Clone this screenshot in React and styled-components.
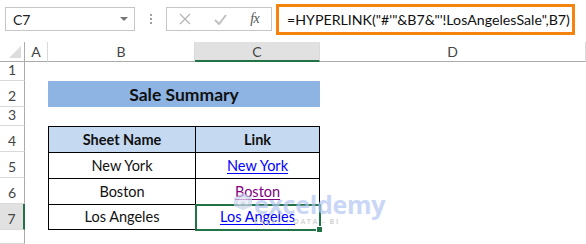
import React from 'react'
import styled, { createGlobalStyle } from 'styled-components'

const Global = createGlobalStyle`
    body {
        margin: 0;
        background: #ffffff;
        font-family: "Lato", "Liberation Sans", sans-serif;
    }
`

const Page = styled.div`
    position: relative;
    width: 586px;
    height: 244px;
    overflow: hidden;
    background: #ffffff;
`

const Bar = styled.div`
    display: flex;
    align-items: flex-start;
    height: 42px;
    padding-left: 5px;
    box-sizing: border-box;
`

const NameBox = styled.div`
    display: flex;
    align-items: center;
    justify-content: space-between;
    width: 130px;
    height: 24px;
    margin-top: 7px;
    padding: 0 6px 0 7px;
    box-sizing: border-box;
    border: 1px solid #c6c6c6;
    font-size: 14px;
    color: #222;
`

const Arrow = styled.span`
    width: 0;
    height: 0;
    border-left: 4px solid transparent;
    border-right: 4px solid transparent;
    border-top: 4px solid #777;
`

const Dots = styled.div`
    display: flex;
    flex-direction: column;
    gap: 2px;
    margin: 14px 14px 0 15px;
    span {
        width: 2px;
        height: 2px;
        background: #a0a0a0;
    }
`

const Buttons = styled.div`
    display: flex;
    align-items: center;
    justify-content: space-around;
    width: 106px;
    height: 24px;
    margin-top: 7px;
    box-sizing: border-box;
    border: 1px solid #c6c6c6;
`

const Fx = styled.span`
    font-family: "Liberation Serif", serif;
    font-style: italic;
    font-size: 14px;
    color: #555;
    letter-spacing: -0.5px;
`

const Formula = styled.div`
    display: flex;
    align-items: center;
    width: 299px;
    height: 31px;
    margin: 4px 0 0 4px;
    padding-left: 8px;
    box-sizing: border-box;
    border: 3px solid #f7830f;
    font-size: 14.2px;
    color: #111;
    white-space: nowrap;
`

const Sheet = styled.div`
    display: grid;
    grid-template-columns: 25px 23px 147px 125px 1fr;
    grid-template-rows: 20px 19px 26px 19px 26px 26px 26px 26px 14px;
`

const Corner = styled.div`
    position: relative;
    border-right: 1px solid #ababab;
    border-bottom: 1px solid #ababab;
    &::after {
        content: '';
        position: absolute;
        right: 3px;
        bottom: 3px;
        border-left: 12px solid transparent;
        border-bottom: 12px solid #dcdcdc;
    }
`

const ColHead = styled.div`
    display: flex;
    align-items: center;
    justify-content: center;
    font-size: 14px;
    color: #444;
    background: ${p => (p.$active ? '#e1e1e1' : '#ffffff')};
    border-right: 1px solid #dadada;
    border-bottom: ${p => (p.$active ? '2px solid #217346' : '1px solid #ababab')};
    box-sizing: border-box;
`

const RowHead = styled.div`
    display: flex;
    align-items: flex-end;
    justify-content: center;
    padding-bottom: 1px;
    font-size: 14px;
    line-height: 18px;
    color: #444;
    background: ${p => (p.$active ? '#e1e1e1' : '#ffffff')};
    border-bottom: 1px solid #dadada;
    border-right: ${p => (p.$active ? '2px solid #217346' : '1px solid #ababab')};
    box-sizing: border-box;
`

const Blank = styled.div``

const Title = styled.div`
    grid-column: span 2;
    display: flex;
    align-items: center;
    justify-content: center;
    background: #8db4e2;
    font-weight: 700;
    font-size: 17.5px;
    color: #111;
`

const TableCell = styled.div`
    position: relative;
    display: flex;
    align-items: flex-end;
    justify-content: center;
    padding-bottom: 3px;
    font-size: 14.5px;
    font-weight: ${p => (p.$head ? 700 : 400)};
    line-height: 18px;
    color: #111;
    background: ${p => (p.$head ? '#c5d9f1' : '#ffffff')};
    border-top: 1px solid #000;
    border-left: 1px solid #000;
    border-right: ${p => (p.$right ? '1px solid #000' : 'none')};
    border-bottom: ${p => (p.$bottom ? '1px solid #000' : 'none')};
    box-sizing: border-box;
`

const Link = styled.span`
    color: ${p => (p.$visited ? '#800080' : '#0000ff')};
    text-decoration: underline;
    text-underline-offset: 2px;
`

const Selection = styled.div`
    position: absolute;
    left: -1px;
    top: -1px;
    right: -2px;
    bottom: -2px;
    border: 2px solid #217346;
    pointer-events: none;
    &::after {
        content: '';
        position: absolute;
        right: -4px;
        bottom: -4px;
        width: 5px;
        height: 5px;
        background: #217346;
        border: 1px solid #ffffff;
    }
`

/* faint site logo laid over the sheet */
const Watermark = styled.div`
    position: absolute;
    left: 233px;
    top: 192px;
    display: flex;
    gap: 1px;
    opacity: 0.7;
    pointer-events: none;
`

const MarkText = styled.div`
    display: flex;
    flex-direction: column;
    line-height: 1;
`

const MarkName = styled.span`
    font-family: "Open Sans", sans-serif;
    font-weight: 700;
    font-size: 25px;
    color: #b4c6f2;
    letter-spacing: -0.3px;
`

const MarkTag = styled.span`
    margin-top: 1px;
    font-family: "Open Sans", sans-serif;
    font-weight: 700;
    font-size: 7px;
    letter-spacing: 1.6px;
    color: #c4c4c4;
`

const columns = ['A', 'B', 'C', 'D']

const rows = [
    { city: 'New York' },
    { city: 'Boston', visited: true },
    { city: 'Los Angeles', selected: true },
]

const App = () => {
    return (
        <Page>
            <Global />
            <Bar>
                <NameBox>
                    C7
                    <Arrow />
                </NameBox>
                <Dots>
                    <span />
                    <span />
                    <span />
                </Dots>
                <Buttons>
                    <svg width="12" height="12" viewBox="0 0 12 12">
                        <path d="M1 1 L11 11 M11 1 L1 11" stroke="#b5b5b5" strokeWidth="1.3" />
                    </svg>
                    <svg width="13" height="11" viewBox="0 0 13 11">
                        <path d="M1 6 L5 10 L12 1" stroke="#c0c0c0" strokeWidth="2" fill="none" />
                    </svg>
                    <Fx>fx</Fx>
                </Buttons>
                <Formula>=HYPERLINK("#'"&amp;B7&amp;"'!LosAngelesSale",B7)</Formula>
            </Bar>
            <Sheet>
                <Corner />
                {columns.map(c => (
                    <ColHead key={c} $active={c === 'C'}>{c}</ColHead>
                ))}

                <RowHead>1</RowHead>
                <Blank /><Blank /><Blank /><Blank />

                <RowHead>2</RowHead>
                <Blank />
                <Title>Sale Summary</Title>
                <Blank />

                <RowHead>3</RowHead>
                <Blank /><Blank /><Blank /><Blank />

                <RowHead>4</RowHead>
                <Blank />
                <TableCell $head>Sheet Name</TableCell>
                <TableCell $head $right>Link</TableCell>
                <Blank />

                {rows.map((r, i) => {
                    const last = i === rows.length - 1
                    return (
                        <React.Fragment key={r.city}>
                            <RowHead $active={r.selected}>{i + 5}</RowHead>
                            <Blank />
                            <TableCell $bottom={last}>{r.city}</TableCell>
                            <TableCell $right $bottom={last}>
                                <Link $visited={r.visited}>{r.city}</Link>
                                {r.selected && <Selection />}
                            </TableCell>
                            <Blank />
                        </React.Fragment>
                    )
                })}

                <RowHead />
                <Blank /><Blank /><Blank /><Blank />
            </Sheet>
            <Watermark>
                <svg width="20" height="19" viewBox="0 0 21 20">
                    <path d="M10.5 1 L20 6 L20 15 L10.5 19 L1 15 L1 6 Z" fill="#c9d3ea" />
                    <path d="M10.5 5 L16 8.5 L16 14 L5 14 L5 8.5 Z" fill="#e4e9f5" />
                    <path d="M8.5 10 H12.5 V14 H8.5 Z" fill="#c9d3ea" />
                </svg>
                <MarkText>
                    <MarkName>exceldemy</MarkName>
                    <MarkTag>EXCEL - DATA - BI</MarkTag>
                </MarkText>
            </Watermark>
        </Page>
    )
}

export default App
